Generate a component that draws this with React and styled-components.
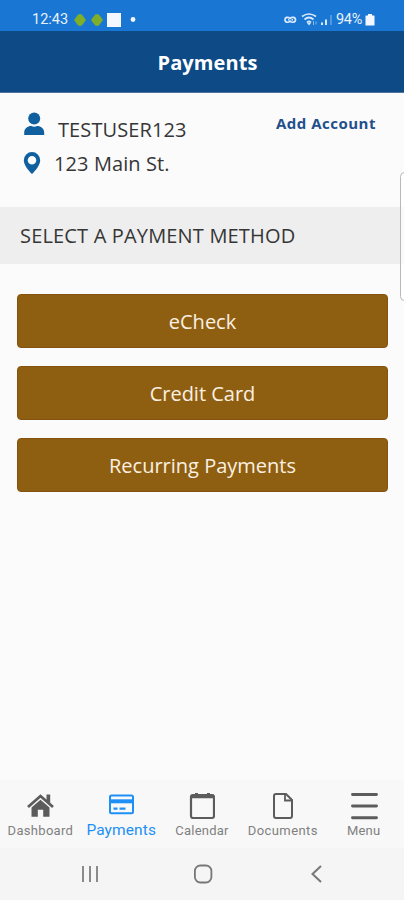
import React from "react";
import styled, { createGlobalStyle } from "styled-components";

const GlobalStyle = createGlobalStyle`
  * { box-sizing: border-box; }
  body { margin: 0; background: #fbfbfb; }
  svg { display: block; flex: none; }
`;

const Screen = styled.div`
  position: relative;
  width: 404px;
  height: 900px;
  overflow: hidden;
  display: flex;
  flex-direction: column;
  background: #fbfbfb;
  font-family: "Open Sans", "Noto Sans", sans-serif;
`;

const StatusBar = styled.div`
  height: 31px;
  flex: none;
  display: flex;
  align-items: center;
  justify-content: space-between;
  padding: 9px 29px 0 32px;
  background: #1976d2;
  color: #e6f1fd;
  font: 400 14.5px/20px Roboto, sans-serif;
`;

const StatusGroup = styled.div`
  display: flex;
  align-items: center;
`;

const StatusText = styled.span`
  width: ${(p) => p.$width}px;
  letter-spacing: ${(p) => p.$spacing || 0}px;
  white-space: nowrap;
`;

const Header = styled.header`
  height: 62px;
  flex: none;
  display: flex;
  align-items: center;
  justify-content: center;
  padding: 2px 0 0 11px;
  background: #0d4a86;
  border-bottom: 1px solid #53719f;
`;

const Title = styled.h1`
  margin: 0;
  color: #fff;
  font-size: 20px;
  line-height: 28px;
  font-weight: 700;
  letter-spacing: 0.1px;
`;

const Account = styled.section`
  height: 114px;
  flex: none;
  display: flex;
  justify-content: space-between;
  padding: 19px 28px 0 22px;
`;

const Details = styled.div`
  display: flex;
  flex-direction: column;
`;

const DetailRow = styled.div`
  height: 34px;
  display: flex;
  align-items: flex-start;
  gap: 12px;
  color: #363636;
  font-size: 20px;
  line-height: 36px;
  font-weight: 400;
  letter-spacing: 0.1px;
`;

const AddAccount = styled.a`
  height: 22px;
  color: #1f4f8c;
  font-size: 15px;
  line-height: 22px;
  font-weight: 700;
  letter-spacing: 0.5px;
`;

const Banner = styled.h2`
  height: 57px;
  flex: none;
  margin: 0;
  padding-left: 20px;
  background: #eee;
  color: #363636;
  font-size: 20px;
  line-height: 58px;
  font-weight: 400;
  letter-spacing: 0.17px;
`;

const Methods = styled.main`
  flex: 1;
  display: flex;
  flex-direction: column;
  gap: 18px;
  padding: 30px 16px 0 17px;
`;

const MethodButton = styled.button`
  height: 54px;
  padding: 1px 0 0;
  border: 1px solid #855211;
  border-radius: 4px;
  background: #8f5f11;
  color: #fbf0e2;
  font: 400 20px/28px "Open Sans", sans-serif;
`;

const Tabs = styled.nav`
  height: 68px;
  flex: none;
  display: grid;
  grid-template-columns: repeat(5, 1fr);
  background: #f8f8f8;
`;

const Tab = styled.div`
  display: flex;
  flex-direction: column;
  align-items: center;
  padding-top: 9px;
  color: ${(p) => (p.$active ? "#1e90f5" : "#808080")};
  font: 400 ${(p) => (p.$active ? 15.5 : 13)}px/${(p) => (p.$active ? 16 : 18)}px Roboto, sans-serif;
  letter-spacing: ${(p) => p.$spacing || 0}px;
  white-space: nowrap;
`;

const TabIcon = styled.div`
  height: 33px;
  display: flex;
  align-items: center;
  color: ${(p) => (p.$active ? "#1e90f5" : "#5c5c5c")};
`;

const SystemNav = styled.div`
  height: 52px;
  flex: none;
  display: flex;
  align-items: center;
  justify-content: space-between;
  padding: 0 82px 0 80px;
  background: #f5f5f5;
`;

const EdgeHandle = styled.div`
  position: absolute;
  right: -5px;
  top: 172px;
  width: 9px;
  height: 129px;
  border: 1px solid #b9b9b9;
  border-radius: 5px;
  background: rgba(255, 255, 255, 0.65);
`;

const Notifications = () => (
  <svg width="70" height="16" viewBox="0 0 70 16" fill="#7fae2b">
    <path d="M6 2q2 0 3 2l3 4-3 4q-1 2-3 2t-3-2L0 8l3-4q1-2 3-2Z" />
    <path d="M23 2q2 0 3 2l3 4-3 4q-1 2-3 2t-3-2l-3-4 3-4q1-2 3-2Z" />
    <path fill="#f4f7ff" d="M33 1h14v14H33z" />
    <circle cx="59" cy="7.5" r="2.4" fill="#f4f7ff" />
  </svg>
);

const Signals = () => (
  <svg width="52" height="16" viewBox="0 0 52 16" fill="none" stroke="#d8e9ff">
    <path d="M6 6.5C4.500 4.800 1 4.800 1 7.800s3.500 3 5 1.200c1.500 1.800 5.500 1.800 5.500-1.200S7.500 4.800 6 6.500Z" strokeWidth="1.700" />
    <path d="M4 7.800h1M7.500 7.800h1.500" strokeWidth="1.400" />
    <path d="M18 4.500q7-5 14 0M20.500 7.500q4.500-4 9 0M23 10.500q2-2 4 0" strokeWidth="1.700" />
    <path d="m23 11 2 2.500 2-2.500Z" fill="#d8e9ff" stroke="none" />
    <path d="M29.500 9v4M32 9.500v3" opacity=".6" />
    <path d="M38 10.500V13M42 7.500V13" strokeWidth="2" />
    <path d="M47 3v10" strokeWidth="2" opacity=".3" />
  </svg>
);

const Battery = () => (
  <svg width="10" height="14" viewBox="0 0 10 14" fill="#f4f7ff">
    <path d="M3 1h4v1.500h2q.500 0 .500.500v9.500h-9V3q0-.500.500-.500h2z" />
  </svg>
);

const UserIcon = () => (
  <svg width="24" height="24" viewBox="0 0 24 24" fill="#10609f">
    <circle cx="12.200" cy="6.600" r="6" />
    <path d="M2.200 22.900v-2.200c0-4.200 3.500-6.600 7-6.600 1.800 1 4.200 1 6 0 3.500 0 7 2.400 7 6.600v2.200Z" />
  </svg>
);

const PinIcon = () => (
  <svg width="20" height="29" viewBox="0 0 20 29" fill="#10609f">
    <path fillRule="evenodd" d="M10 6a8.200 8.200 0 0 0-8.200 8.200C1.800 19 6.500 24.500 10 28c3.500-3.500 8.200-9 8.200-13.800A8.200 8.200 0 0 0 10 6Zm0 4a4.300 4.300 0 1 1 0 8.600 4.300 4.300 0 0 1 0-8.600Z" />
  </svg>
);

const HomeIcon = () => (
  <svg width="28" height="30" viewBox="0 0 28 30" fill="currentColor">
    <path d="M2 16 14.500 5 27 16" fill="none" stroke="currentColor" strokeWidth="2.800" />
    <path d="M20.500 3.500h3.700v9l-3.700-3ZM5.500 16.500l9-7.700 9 7.700v9.300h-6.300v-7h-5.400v7H5.500Z" />
  </svg>
);

const CardIcon = () => (
  <svg width="26" height="30" viewBox="0 0 26 30" fill="none" stroke="currentColor">
    <rect x="2" y="4.500" width="23" height="17.800" rx="1.500" strokeWidth="2" />
    <path d="M2 10.300h23" strokeWidth="4" />
    <path d="M5.500 17.700h4M11.500 17.700h6" strokeWidth="2.200" />
  </svg>
);

const CalendarIcon = () => (
  <svg width="26" height="30" viewBox="0 0 26 30" fill="none" stroke="currentColor">
    <rect x="2" y="4" width="23" height="23" rx="2" strokeWidth="2.200" />
    <path d="M2 5.500h23" strokeWidth="3.500" />
    <path d="M7.500 2v3M19.500 2v3" strokeWidth="3" />
  </svg>
);

const DocumentIcon = () => (
  <svg width="22" height="30" viewBox="0 0 22 30" fill="none" stroke="currentColor" strokeWidth="2">
    <path d="M4 3h10l6 6v16a2 2 0 0 1-2 2H4a2 2 0 0 1-2-2V5a2 2 0 0 1 2-2Z" />
    <path d="M13 3v6.500h7" strokeWidth="1.800" />
  </svg>
);

const MenuIcon = () => (
  <svg width="28" height="30" viewBox="0 0 28 30" stroke="currentColor" strokeWidth="2.900" strokeLinecap="round">
    <path d="M2.500 3.500h24M2.500 15h24M2.500 26.800h24" />
  </svg>
);

const tabs = [
  { label: "Dashboard", Icon: HomeIcon, spacing: 0.3 },
  { label: "Payments", Icon: CardIcon, active: true, spacing: 0.1 },
  { label: "Calendar", Icon: CalendarIcon, spacing: 0.25 },
  { label: "Documents", Icon: DocumentIcon, spacing: 0.4 },
  { label: "Menu", Icon: MenuIcon, spacing: 0.2 },
];

export default function App() {
  return (
    <>
      <GlobalStyle />
      <Screen>
        <StatusBar>
          <StatusGroup>
            <StatusText $width={42}>12:43</StatusText>
            <Notifications />
          </StatusGroup>
          <StatusGroup>
            <Signals />
            <StatusText $width={29} $spacing={-0.3}>94%</StatusText>
            <Battery />
          </StatusGroup>
        </StatusBar>
        <Header>
          <Title>Payments</Title>
        </Header>
        <Account>
          <Details>
            <DetailRow>
              <UserIcon />
              TESTUSER123
            </DetailRow>
            <DetailRow>
              <PinIcon />
              123 Main St.
            </DetailRow>
          </Details>
          <AddAccount>Add Account</AddAccount>
        </Account>
        <Banner>SELECT A PAYMENT METHOD</Banner>
        <Methods>
          <MethodButton>eCheck</MethodButton>
          <MethodButton>Credit Card</MethodButton>
          <MethodButton>Recurring Payments</MethodButton>
        </Methods>
        <Tabs>
          {tabs.map(({ label, Icon, active, spacing }) => (
            <Tab key={label} $active={active} $spacing={spacing}>
              <TabIcon $active={active}>
                <Icon />
              </TabIcon>
              {label}
            </Tab>
          ))}
        </Tabs>
        <SystemNav>
          <svg width="20" height="20" viewBox="0 0 20 20" stroke="#858585" strokeWidth="1.900">
            <path d="M3 2v16M10 2v16M17 2v16" />
          </svg>
          <svg width="22" height="22" viewBox="0 0 22 22" fill="none" stroke="#777" strokeWidth="1.800">
            <rect x="0.900" y="2.500" width="16.500" height="17" rx="5.500" />
          </svg>
          <svg width="12" height="20" viewBox="0 0 12 20" fill="none" stroke="#777" strokeWidth="2">
            <path d="m11 2-8.500 8L11 18" />
          </svg>
        </SystemNav>
        <EdgeHandle />
      </Screen>
    </>
  );
}
